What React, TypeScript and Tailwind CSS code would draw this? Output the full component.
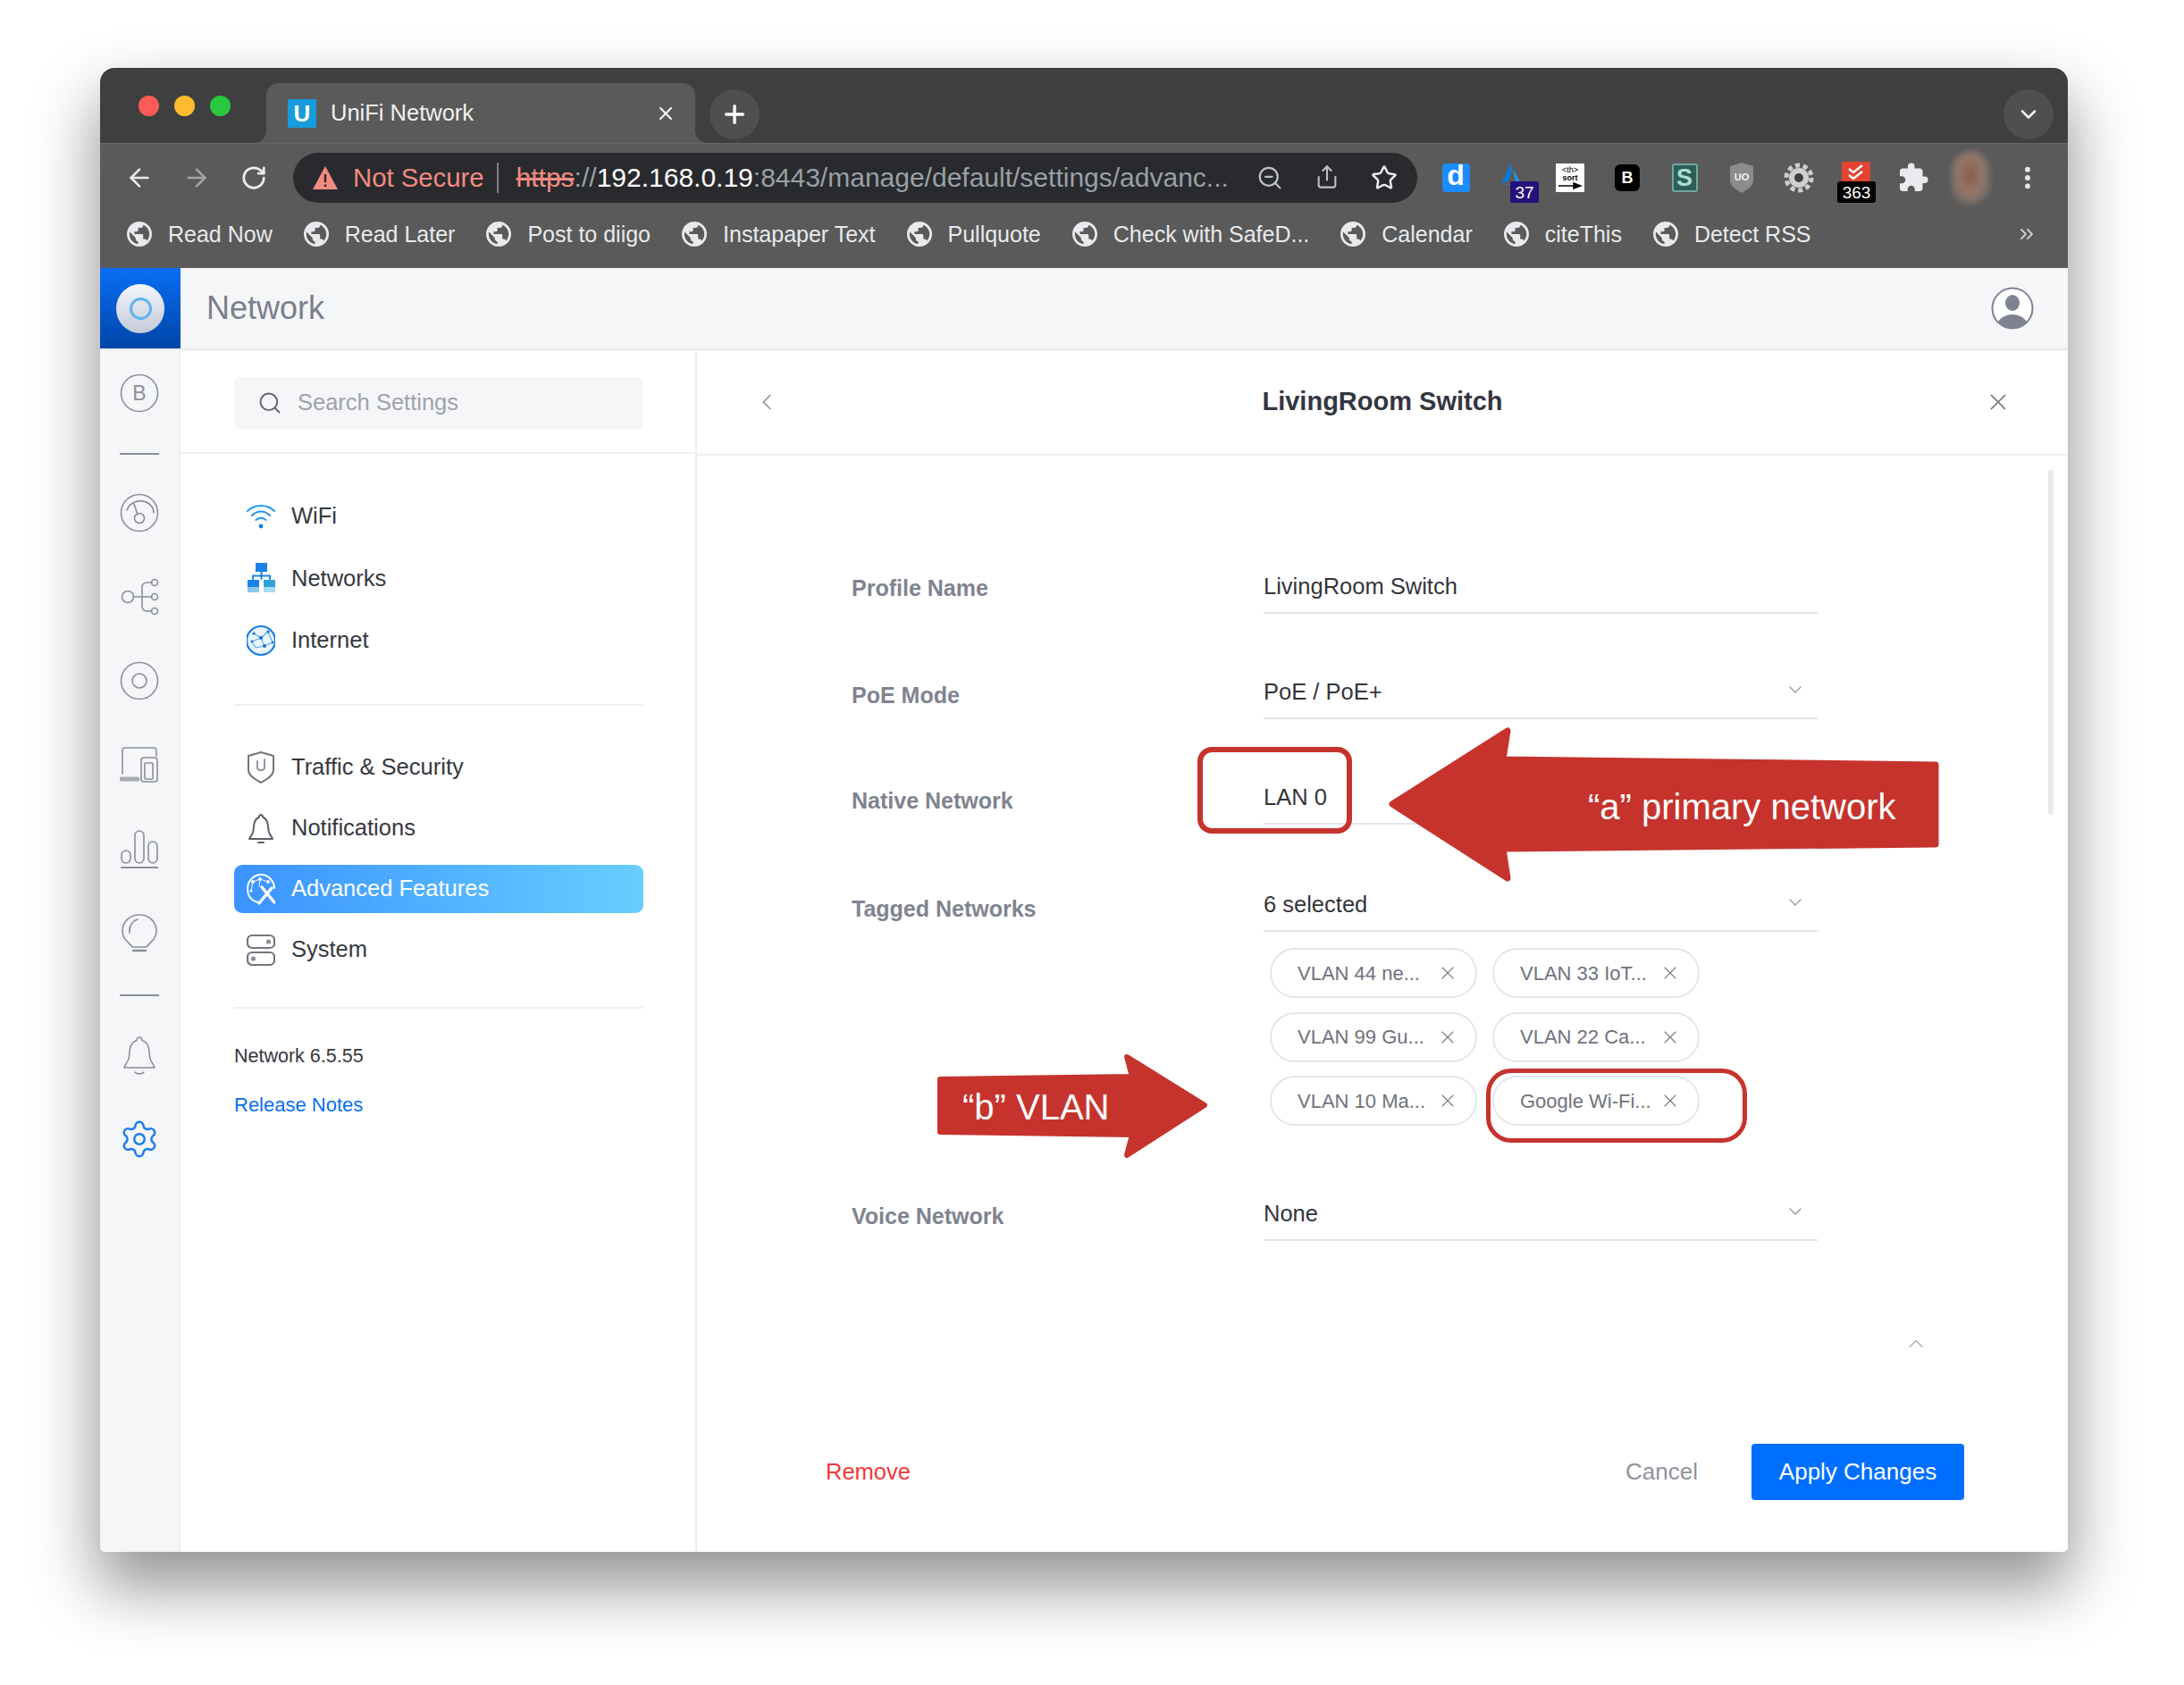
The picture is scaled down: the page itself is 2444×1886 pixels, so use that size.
import { ArrowLeft, ArrowRight, RotateCw, ZoomOut, Share, Star, EllipsisVertical, ChevronsRight, ChevronDown, ChevronUp, ChevronLeft, X, Plus, Search, Settings } from "lucide-react";
import { MdExtension } from "react-icons/md";
import type { ReactNode } from "react";

function Globe() {
  return (
    <svg viewBox="2 2 20 20" className="w-[28px] h-[28px] shrink-0" fill="#e8eaed">
      <path d="M12 2C6.48 2 2 6.48 2 12s4.48 10 10 10 10-4.48 10-10S17.52 2 12 2zm-1 17.93c-3.95-.49-7-3.85-7-7.93 0-.62.08-1.21.21-1.79L9 15v1c0 1.1.9 2 2 2v1.93zm6.9-2.54c-.26-.81-1-1.39-1.9-1.39h-1v-3c0-.55-.45-1-1-1H8v-2h2c.55 0 1-.45 1-1V7h2c1.1 0 2-.9 2-2v-.41c2.93 1.19 5 4.06 5 7.41 0 2.08-.8 3.97-2.1 5.39z" />
    </svg>
  );
}

function Rail({ children }: { children: ReactNode }) {
  return (
    <svg viewBox="0 0 44 44" className="w-[44px] h-[44px]" fill="none" stroke="#8b8e9b" strokeWidth="1.6" strokeLinecap="round" strokeLinejoin="round">
      {children}
    </svg>
  );
}

function Nav({ children }: { children: ReactNode }) {
  return (
    <svg viewBox="0 0 32 36" className="w-[32px] h-[36px] shrink-0" fill="none" strokeLinecap="round" strokeLinejoin="round">
      {children}
    </svg>
  );
}

const navIcons: Record<string, ReactNode> = {
  WiFi: (
    <Nav>
      <g stroke="#1d9bf0" strokeWidth="2">
        <path d="M1 12 C9 4 23 4 31 12" />
        <path d="M6 17 C12 11 20 11 26 17" stroke="#2b8fe6" />
        <path d="M10.5 22 C14 19 18 19 21.5 22" />
      </g>
      <circle cx="16" cy="29" r="2.4" fill="#1a7fe0" />
    </Nav>
  ),
  Networks: (
    <Nav>
      <rect x="10" y="1" width="13" height="10" fill="#1a82e6" />
      <path d="M16.5 11 V19 M7 19 V15.5 H26 V19" stroke="#1a82e6" strokeWidth="2" />
      <rect x="1" y="20" width="13" height="8" fill="#1a82e6" />
      <rect x="19" y="20" width="13" height="8" fill="#2fa3d6" />
      <rect x="1" y="28" width="13" height="6" fill="#8cc4f2" />
      <rect x="19" y="28" width="13" height="6" fill="#a5dcf2" />
    </Nav>
  ),
  Internet: (
    <Nav>
      <circle cx="16" cy="18" r="16" fill="#eaf4fd" stroke="#1a7fe0" strokeWidth="2.2" />
      <g stroke="#58a9ec" strokeWidth="1.1">
        <path d="M8 10 L16 15 L24 8 M16 15 L20 24 L10 26 M20 24 L29 20 M16 15 L6 19 L10 26 M24 8 L29 20" />
      </g>
      <g fill="#1a6fd0">
        <circle cx="16" cy="15" r="2" />
        <circle cx="20" cy="24" r="2" />
        <circle cx="8" cy="10" r="1.6" />
        <circle cx="24" cy="8" r="1.6" />
        <circle cx="6" cy="19" r="1.4" />
        <circle cx="29" cy="20" r="1.4" />
      </g>
    </Nav>
  ),
  "Traffic & Security": (
    <Nav>
      <path d="M16 1 L30 5 V21 C30 28 21 32 16 35 C11 32 2 28 2 21 V5 Z" stroke="#73767f" strokeWidth="2" />
      <path d="M12 11 V18 C12 22 20 22 20 18 V9" stroke="#8b8e9b" strokeWidth="1.8" />
    </Nav>
  ),
  Notifications: (
    <Nav>
      <path d="M16 3 C17.4 3 18 4 18 5.5 C24 8 24 15 24.5 21 C25 25 28 27 29 30 H3 C4 27 7 25 7.5 21 C8 15 8 8 14 5.5 C14 4 14.6 3 16 3Z" stroke="#5d6068" strokeWidth="2" />
      <path d="M13 34 H19" stroke="#5d6068" strokeWidth="2" />
    </Nav>
  ),
  "Advanced Features": (
    <Nav>
      <path d="M15 33 C7 33 1 27 1 18 C1 9 8 2 16 2 C24 2 31 9 31 17" stroke="#ffffff" strokeWidth="2" />
      <path d="M7 10 L15 7 L24 10 M7 10 L5 20 M15 7 L14 15" stroke="#d7ecff" strokeWidth="1.2" />
      <g fill="#ffffff">
        <circle cx="7" cy="10" r="2" />
        <circle cx="15" cy="7" r="2" />
        <circle cx="24" cy="10" r="2" />
        <circle cx="5" cy="20" r="1.6" />
      </g>
      <path d="M17 16 L31 33 M28 17 L14 34" stroke="#ffffff" strokeWidth="3.4" />
    </Nav>
  ),
  System: (
    <Nav>
      <rect x="1" y="2" width="30" height="14" rx="5" stroke="#73767f" strokeWidth="2.2" />
      <rect x="1" y="21" width="30" height="14" rx="5" stroke="#73767f" strokeWidth="2.2" />
      <circle cx="24.5" cy="9" r="2.6" fill="#8b8e9b" />
      <circle cx="7.5" cy="28" r="2.6" fill="#8b8e9b" />
    </Nav>
  ),
};

function NavRow({ label, h, active }: { label: string; h: string; active?: boolean }) {
  return (
    <div className={`flex items-center ${h}`}>
      <div className={active ? "flex items-center w-full h-[54px] rounded-[9px] pl-[14px] gap-[18px] bg-gradient-to-r from-[#3b93ff] to-[#68cdff] text-white" : "flex items-center w-full pl-[14px] gap-[18px] text-[#36383f]"}>
        {navIcons[label]}
        <span className="text-[25.5px] leading-none">{label}</span>
      </div>
    </div>
  );
}

function Field({ value, caret, mt, labelText, labelPad }: { value: string; caret?: boolean; mt: string; labelText: string; labelPad: string }) {
  return (
    <div className={`flex ${mt}`}>
      <div className={`w-[461px] h-[59px] flex items-center ${labelPad} text-[25px] font-bold text-[#808390]`}>{labelText}</div>
      <div className="w-[620px] h-[59px] border-b-2 border-[#e3e5ed] flex items-center justify-between pr-[13px] text-[25.5px] text-[#33353c]">
        <span>{value}</span>
        {caret && <ChevronDown size={24} strokeWidth={1.2} color="#8f929e" className="-mt-[6px]" />}
      </div>
    </div>
  );
}

function Chip({ text }: { text: string }) {
  return (
    <div className="w-[232px] h-[56px] rounded-full border-2 border-[#e4e6ee] flex items-center justify-between pl-[29px] pr-[19px] text-[22px] text-[#6f727c]">
      <span className="whitespace-nowrap">{text}</span>
      <X size={24} strokeWidth={1.1} color="#777a85" />
    </div>
  );
}

export default function App() {
  const bookmarks = ["Read Now", "Read Later", "Post to diigo", "Instapaper Text", "Pullquote", "Check with SafeD...", "Calendar", "citeThis", "Detect RSS"];
  return (
    <div className="relative w-[2444px] h-[1886px] bg-white pl-[112px] pt-[76px] overflow-hidden font-['Liberation_Sans',sans-serif]">
      <div className="w-[2202px] h-[1661px] rounded-t-[16px] rounded-b-[6px] flex flex-col overflow-hidden shadow-[0_36px_70px_4px_rgba(0,0,0,0.42)]">
        {/* tab strip */}
        <div className="h-[84px] bg-[#3f3f3f] flex items-end shrink-0">
          <div className="flex items-center gap-[17px] pl-[43px] h-full">
            <div className="w-[23px] h-[23px] rounded-full bg-[#fc5b57]" />
            <div className="w-[23px] h-[23px] rounded-full bg-[#fdbc2e]" />
            <div className="w-[23px] h-[23px] rounded-full bg-[#29c83f]" />
          </div>
          <div className="relative ml-[40px] w-[480px] h-[67px] bg-[#5a5a5a] rounded-t-[14px] flex items-center pl-[24px] pr-[21px] text-white">
            <svg viewBox="0 0 14 14" className="absolute -left-[14px] bottom-0 w-[14px] h-[14px]"><path d="M14 0 V14 H0 A14 14 0 0 0 14 0Z" fill="#5a5a5a" /></svg>
            <svg viewBox="0 0 14 14" className="absolute -right-[14px] bottom-0 w-[14px] h-[14px]"><path d="M0 0 V14 H14 A14 14 0 0 1 0 0Z" fill="#5a5a5a" /></svg>
            <div className="w-[32px] h-[32px] bg-[#179bdc] flex items-center justify-center text-white font-bold text-[26px] leading-none">U</div>
            <span className="ml-[16px] text-[25.5px] leading-none text-[#f1f1f1]">UniFi Network</span>
            <X size={24} strokeWidth={2.2} color="#f1f1f1" className="ml-auto" />
          </div>
          <div className="ml-[16px] mb-[4px] w-[56px] h-[56px] rounded-full bg-[#4f4f4f] flex items-center justify-center">
            <Plus size={32} strokeWidth={2.6} color="#ffffff" />
          </div>
          <div className="ml-auto mr-[16px] mb-[4px] w-[56px] h-[56px] rounded-full bg-[#4f4f4f] flex items-center justify-center">
            <ChevronDown size={28} strokeWidth={2.2} color="#f1f1f1" />
          </div>
        </div>

        {/* toolbar */}
        <div className="h-[140px] bg-[#5a5a5a] border-t border-[#666666] shrink-0 flex flex-col">
          <div className="h-[76px] flex items-center pl-[12px]">
            <div className="w-[64px] flex justify-center"><ArrowLeft size={32} strokeWidth={2} color="#e8eaed" /></div>
            <div className="w-[64px] flex justify-center"><ArrowRight size={32} strokeWidth={2} color="#a3a3a3" /></div>
            <div className="w-[64px] flex justify-center"><RotateCw size={30} strokeWidth={2.2} color="#e8eaed" /></div>
            <div className="ml-[12px] w-[1258px] h-[56px] rounded-full bg-[#292a2d] flex items-center pl-[21px] pr-[5px]">
              <svg viewBox="0 0 30 28" className="w-[30px] h-[28px] shrink-0">
                <path d="M15 1 L29 27 H1 Z" fill="#f28b82" />
                <path d="M15 10 V19 M15 21.5 V24" stroke="#292a2d" strokeWidth="2.4" />
              </svg>
              <span className="ml-[16px] text-[29.3px] leading-none text-[#f28b82] whitespace-nowrap">Not Secure</span>
              <div className="ml-[14px] w-[2px] h-[34px] bg-[#7d7e80]" />
              <span className="ml-[20px] text-[30px] leading-none whitespace-nowrap">
                <span className="text-[#f28b82] line-through">https</span>
                <span className="text-[#9aa0a6]">://</span>
                <span className="text-white">192.168.0.19</span>
                <span className="text-[#9aa0a6]">:8443/manage/default/settings/advanc...</span>
              </span>
              <div className="ml-auto flex">
                <div className="w-[64px] flex justify-center"><ZoomOut size={30} strokeWidth={1.8} color="#bdc1c6" /></div>
                <div className="w-[64px] flex justify-center"><Share size={28} strokeWidth={1.8} color="#bdc1c6" /></div>
                <div className="w-[64px] flex justify-center"><Star size={30} strokeWidth={2} color="#e8eaed" /></div>
              </div>
            </div>
            <div className="ml-[11px] flex items-center">
              <div className="w-[64px] flex justify-center">
                <div className="w-[31px] h-[32px] rounded-[4px] bg-[#1a8cff] flex items-center justify-center text-white font-bold text-[32px] leading-none pb-[6px]">d</div>
              </div>
              <div className="relative w-[64px] h-[56px] flex justify-center">
                <svg viewBox="0 0 28 28" className="absolute left-[16px] top-[10px] w-[28px] h-[28px]">
                  <path d="M14 1 L3 24 L11 22 L15 12 Z" fill="#0f78d4" />
                  <path d="M16 8 L26 26 L9 26 L19 23 Z" fill="#1f95e8" />
                </svg>
                <div className="absolute left-[29px] top-[32px] w-[32px] h-[24px] rounded-[2px] bg-[#26107a] flex items-center justify-center text-white text-[19px] leading-none">37</div>
              </div>
              <div className="w-[64px] flex justify-center">
                <div className="w-[32px] h-[32px] bg-white flex flex-col items-center justify-center text-black text-[9px] leading-[9px]">
                  <span>&lt;th&gt;</span>
                  <span className="font-bold">sort</span>
                  <svg viewBox="0 0 28 8" className="w-[28px] h-[8px]"><path d="M1 4 H22 M18 1 L26 4 L18 7Z" stroke="#000" strokeWidth="1.5" fill="#000" /></svg>
                </div>
              </div>
              <div className="w-[64px] flex justify-center">
                <div className="w-[28px] h-[30px] rounded-[6px] bg-black flex items-center justify-center text-white font-bold text-[18px] leading-none">B</div>
              </div>
              <div className="w-[64px] flex justify-center">
                <div className="w-[29px] h-[32px] rounded-[3px] bg-[#2f5d58] border-2 border-[#6fa8a0] flex items-center justify-center text-[#a8e0d6] font-bold text-[27px] leading-none">S</div>
              </div>
              <div className="w-[64px] flex justify-center">
                <svg viewBox="0 0 28 34" className="w-[28px] h-[34px]">
                  <path d="M14 0 L27 4 V20 C27 27 19 31 14 34 C9 31 1 27 1 20 V4 Z" fill="#8c8c8c" />
                  <text x="14" y="20" textAnchor="middle" fontSize="11" fontWeight="700" fill="#f2f2f2">UO</text>
                </svg>
              </div>
              <div className="w-[64px] flex justify-center">
                <svg viewBox="0 0 34 34" className="w-[34px] h-[34px]">
                  <circle cx="17" cy="17" r="14" fill="none" stroke="#cfcfcf" strokeWidth="5" strokeDasharray="5 3.8" />
                  <circle cx="17" cy="17" r="11" fill="#cfcfcf" />
                  <circle cx="17" cy="17" r="5" fill="#3f3f3f" />
                </svg>
              </div>
              <div className="relative w-[64px] h-[56px]">
                <svg viewBox="0 0 32 24" className="absolute left-[16px] top-[10px] w-[32px] h-[24px]">
                  <rect width="32" height="24" rx="2" fill="#e44332" />
                  <path d="M8 8 L13 12 L23 4 M8 15 L13 19 L23 11" stroke="#fff" strokeWidth="2.4" fill="none" />
                </svg>
                <div className="absolute left-[11px] top-[32px] w-[43px] h-[24px] rounded-[3px] bg-black flex items-center justify-center text-white text-[19px] leading-none">363</div>
              </div>
              <div className="w-[64px] flex justify-center"><MdExtension size={36} color="#e8eaed" /></div>
              <div className="w-[64px] flex justify-center">
                <div className="w-[44px] h-[60px] rounded-full blur-[3px] bg-[radial-gradient(ellipse_at_50%_45%,#8a5a48_0%,#94786a_45%,#6f6a66_75%,#5a5a5a_100%)]" />
              </div>
              <div className="w-[64px] flex justify-center"><EllipsisVertical size={32} strokeWidth={2.4} color="#e8eaed" /></div>
            </div>
          </div>
          <div className="h-[50px] flex items-center pl-[30px] gap-[35px]">
            {bookmarks.map((b) => (
              <div key={b} className="flex items-center gap-[18px]">
                <Globe />
                <span className="text-[25px] leading-none text-[#e8eaed] whitespace-nowrap">{b}</span>
              </div>
            ))}
            <ChevronsRight size={24} strokeWidth={1.8} color="#d0d0d0" className="ml-auto mr-[34px]" />
          </div>
        </div>

        {/* app header */}
        <div className="h-[92px] bg-[#f5f6f8] border-b-2 border-[#e9eaef] flex items-center shrink-0">
          <div className="w-[90px] h-[90px] bg-gradient-to-b from-[#0a6ef5] to-[#0045a8] flex items-center justify-center">
            <div className="w-[54px] h-[55px] rounded-full bg-gradient-to-b from-[#f4f6fa] to-[#c3cad8] flex items-center justify-center">
              <div className="w-[25px] h-[25px] rounded-full border-[3px] border-[#5fb2f2]" />
            </div>
          </div>
          <span className="ml-[29px] text-[36px] leading-none text-[#7b7e8c]">Network</span>
          <svg viewBox="0 0 48 48" className="ml-auto mr-[38px] w-[48px] h-[48px]">
            <defs>
              <clipPath id="uc"><circle cx="24" cy="24" r="22.5" /></clipPath>
            </defs>
            <circle cx="24" cy="24" r="22.5" fill="#ffffff" stroke="#7f8291" strokeWidth="2" />
            <g clipPath="url(#uc)" fill="#7f8291">
              <ellipse cx="24" cy="18" rx="8" ry="9" />
              <ellipse cx="24" cy="44" rx="17" ry="13" />
            </g>
          </svg>
        </div>

        {/* body */}
        <div className="flex-1 flex min-h-0">
          <div className="w-[90px] bg-[#f5f6f8] border-r-2 border-[#eceef3] flex flex-col items-center shrink-0">
            <div className="h-[96px] flex items-center">
              <Rail>
                <circle cx="22" cy="22" r="20.5" />
                <text x="22" y="30" textAnchor="middle" fontSize="23" fill="#8b8e9b" stroke="none">B</text>
              </Rail>
            </div>
            <div className="h-[39px] flex items-center"><div className="w-[44px] h-[2px] bg-[#8b8e9b]" /></div>
            <div className="h-[93.8px] flex items-center">
              <Rail>
                <circle cx="22" cy="22" r="20.5" />
                <path d="M8 19 C11 10 24 5 33 12 C37 15 38 19 38 22" />
                <path d="M16 12 L20 24" />
                <circle cx="22" cy="28" r="5.5" />
              </Rail>
            </div>
            <div className="h-[93.8px] flex items-center">
              <Rail>
                <circle cx="9" cy="22" r="6.5" />
                <path d="M15.5 22 H36 M36 6 H30 A5 5 0 0 0 25 11 V33 A5 5 0 0 0 30 38 H36" />
                <circle cx="39" cy="6" r="3.5" />
                <circle cx="39" cy="22" r="3.5" />
                <circle cx="39" cy="38" r="3.5" />
              </Rail>
            </div>
            <div className="h-[95px] flex items-center">
              <Rail>
                <circle cx="22" cy="22" r="20.5" />
                <circle cx="22" cy="22" r="8" />
              </Rail>
            </div>
            <div className="h-[93.8px] flex items-center">
              <Rail>
                <path d="M3 32 V6 A3 3 0 0 1 6 3 H38 A3 3 0 0 1 41 6 V12" />
                <path d="M2 38 H20" strokeWidth="5" stroke="#a7a9b4" />
                <rect x="24" y="14" width="18" height="27" rx="3" />
                <rect x="28" y="20" width="9" height="18" rx="1" />
              </Rail>
            </div>
            <div className="h-[93.8px] flex items-center">
              <Rail>
                <rect x="2" y="24" width="10" height="14" rx="5" />
                <rect x="17" y="2" width="10" height="36" rx="5" />
                <rect x="32" y="14" width="10" height="24" rx="5" />
                <path d="M2 43 H42" strokeWidth="2.2" />
              </Rail>
            </div>
            <div className="h-[93.8px] flex items-center">
              <Rail>
                <path d="M22 2 C10 2 3 11 3 20 C3 30 11 33 14 38 H30 C33 33 41 30 41 20 C41 11 34 2 22 2Z" />
                <path d="M11 22 C10 15 14 9 20 7" />
                <path d="M15 42 H29" strokeWidth="2.4" />
              </Rail>
            </div>
            <div className="h-[46px] flex items-center"><div className="w-[44px] h-[2px] bg-[#8b8e9b]" /></div>
            <div className="h-[88px] flex items-center">
              <Rail>
                <path d="M22 2 C24 2 25 3.5 25 5.5 C33 8 33 17 33.5 24 C34 29 38 32 39 36 H5 C6 32 10 29 10.5 24 C11 17 11 8 19 5.5 C19 3.5 20 2 22 2Z" />
                <path d="M17 41 C19 43.5 25 43.5 27 41" />
              </Rail>
            </div>
            <div className="h-[100px] flex items-center"><Settings size={46} strokeWidth={1.3} color="#1a7df0" /></div>
          </div>

          <div className="w-[578px] bg-white border-r-2 border-[#eceef3] shrink-0">
            <div className="h-[116px] border-b-2 border-[#f0f1f5] pl-[60px] pr-[58px] pt-[4px] flex items-center">
              <div className="w-full h-[58px] rounded-[6px] bg-[#f5f6f8] flex items-center pl-[26px] gap-[17px]">
                <Search size={28} strokeWidth={1.6} color="#5d6068" />
                <span className="text-[25.5px] leading-none text-[#9fa2ac]">Search Settings</span>
              </div>
            </div>
            <div className="pl-[60px] pr-[58px] pt-[35px]">
              <NavRow label="WiFi" h="h-[69.5px]" />
              <NavRow label="Networks" h="h-[69.5px]" />
              <NavRow label="Internet" h="h-[69.5px]" />
              <div className="mt-[36px] h-[2px] bg-[#eff0f4]" />
              <div className="mt-[35px]">
                <NavRow label="Traffic & Security" h="h-[68px]" />
                <NavRow label="Notifications" h="h-[68px]" />
                <NavRow label="Advanced Features" h="h-[68px]" active />
                <NavRow label="System" h="h-[68px]" />
              </div>
              <div className="mt-[30px] h-[2px] bg-[#eff0f4]" />
              <div className="mt-[34px] h-[40px] flex items-center text-[21.5px] text-[#36383f]">Network 6.5.55</div>
              <div className="mt-[14px] h-[40px] flex items-center text-[22px] text-[#0a6ff0]">Release Notes</div>
            </div>
          </div>

          <div className="relative flex-1 bg-white flex flex-col min-w-0">
            <div className="h-[118px] border-b-2 border-[#eceef3] grid grid-cols-[1fr_auto_1fr] items-center shrink-0 pl-[63px] pr-[63px]">
              <ChevronLeft size={30} strokeWidth={1.4} color="#8b8e9b" />
              <span className="text-[29px] leading-none font-bold text-[#33363f] pb-[2px]">LivingRoom Switch</span>
              <X size={30} strokeWidth={1.4} color="#6f727c" className="justify-self-end" />
            </div>
            <div className="pl-[173px] pt-[118px] flex-1 flex flex-col">
              <Field labelText="Profile Name" value="LivingRoom Switch" mt="mt-0" labelPad="pt-[2px]" />
              <Field labelText="PoE Mode" value="PoE / PoE+" caret mt="mt-[59px]" labelPad="pt-[6px]" />
              <Field labelText="Native Network" value="LAN 0" mt="mt-[59px]" labelPad="pt-[6px]" />
              <Field labelText="Tagged Networks" value="6 selected" caret mt="mt-[61px]" labelPad="pt-[8px]" />
              <div className="mt-[18px] ml-[468px] grid grid-cols-[232px_232px] gap-x-[17px] gap-y-[15.5px] w-fit">
                <Chip text="VLAN 44 ne..." />
                <Chip text="VLAN 33 IoT..." />
                <Chip text="VLAN 99 Gu..." />
                <Chip text="VLAN 22 Ca..." />
                <Chip text="VLAN 10 Ma..." />
                <Chip text="Google Wi-Fi..." />
              </div>
              <Field labelText="Voice Network" value="None" caret mt="mt-[70px]" labelPad="pt-[4px]" />
              <div className="mt-[101px] flex justify-end pr-[156px]"><ChevronUp size={28} strokeWidth={1.1} color="#a5a8b2" /></div>
              <div className="mt-auto -ml-[29px] pb-[58px] pr-[116px] flex items-center">
                <span className="text-[25.5px] text-[#f0393a]">Remove</span>
                <span className="ml-auto text-[26px] text-[#8f929b]">Cancel</span>
                <div className="ml-[60px] w-[238px] h-[63px] rounded-[4px] bg-[#006fff] flex items-center justify-center text-white text-[26px]">Apply Changes</div>
              </div>
            </div>
            <div className="absolute right-[16px] top-[134px] w-[6px] h-[386px] rounded-full bg-[#e8e9ee]" />
          </div>
        </div>
      </div>

      {/* annotations */}
      <div className="absolute left-[1340px] top-[836px] w-[173px] h-[97px] rounded-[16px] border-[6px] border-[#c6332d]" />
      <div className="absolute left-[1663px] top-[1196px] w-[292px] h-[83px] rounded-[28px] border-[5px] border-[#c6332d]" />

      <div className="absolute left-[1554px] top-[813px] w-[616px] h-[175px]">
        <svg viewBox="0 0 616 175" className="absolute inset-0 w-full h-full">
          <path d="M4 87 L133 5 L128 37 L612 43 V132 L128 137 L133 170 Z" fill="#c6332d" stroke="#c6332d" strokeWidth="7" strokeLinejoin="round" />
        </svg>
        <span className="absolute left-[223px] top-[68px] text-[40px] leading-[44px] text-white whitespace-nowrap">“a” primary network</span>
      </div>
      <div className="absolute left-[1049px] top-[1179px] w-[303px] h-[118px]">
        <svg viewBox="0 0 303 118" className="absolute inset-0 w-full h-full">
          <path d="M3 29 L218 26 L212 4 L299 58 L212 114 L218 91 L3 88 Z" fill="#c6332d" stroke="#c6332d" strokeWidth="6" strokeLinejoin="round" />
        </svg>
        <span className="absolute left-[28px] top-[38px] text-[40px] leading-[44px] text-white whitespace-nowrap">“b” VLAN</span>
      </div>
    </div>
  );
}
